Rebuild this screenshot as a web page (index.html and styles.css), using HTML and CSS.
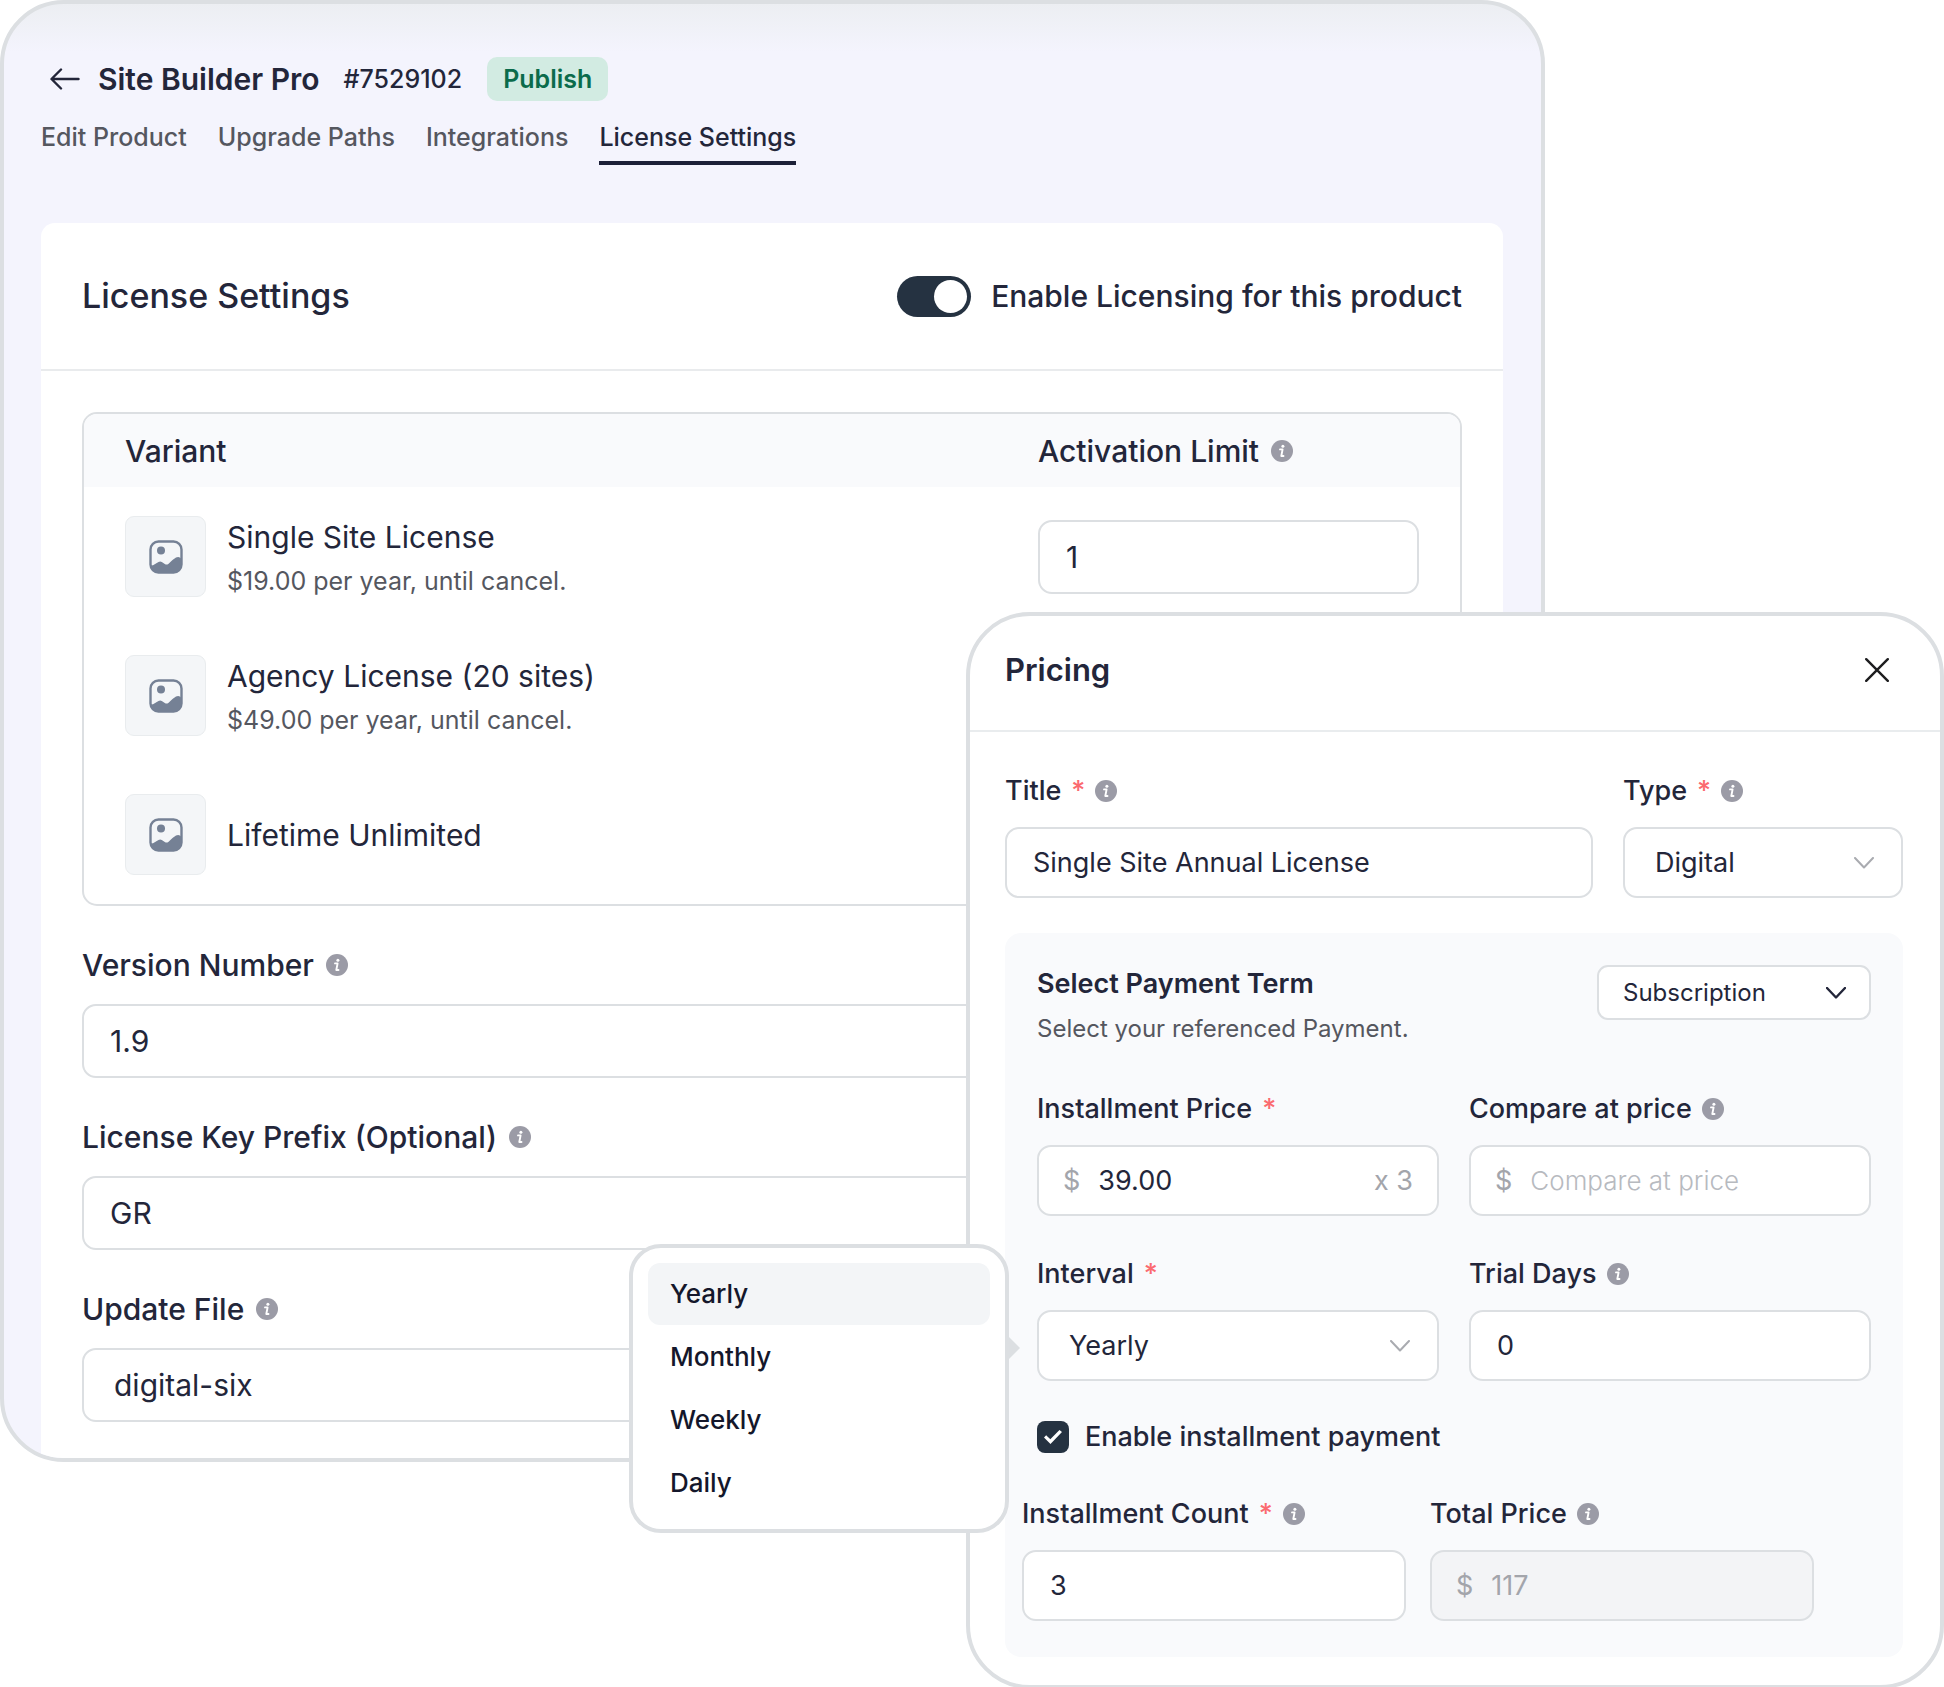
FILE: index.html
```html
<!DOCTYPE html>
<html lang="en">
<head>
<meta charset="utf-8">
<meta name="viewport" content="width=device-width, initial-scale=1">
<title>Site Builder Pro – License Settings</title>
<link rel="stylesheet" href="styles.css">
</head>
<body>
<svg class="sprite" aria-hidden="true">
  <symbol id="i-info" viewBox="0 0 22 22">
    <circle cx="11" cy="11" r="11" fill="#9b9ba6"/>
    <circle cx="11.9" cy="6.2" r="1.5" fill="#fff"/>
    <path d="M9 9.4h2.6l-1.3 6.6h2.2" fill="none" stroke="#fff" stroke-width="1.9" stroke-linecap="round" stroke-linejoin="round"/>
  </symbol>
  <symbol id="i-image" viewBox="0 0 34 34">
    <rect x="1.5" y="1.5" width="31" height="31" rx="8" fill="none" stroke="#758195" stroke-width="2.4"/>
    <circle cx="12" cy="10.500" r="4" fill="#758195"/>
    <path d="M1.500 25.500l2.500-.3 5.500-3.200c1.200-.7 2.200-.7 3.300 0l3 2c1.200.8 2.300.8 3.500 0l4.200-4 3.500-2.500c1.500-.9 3-.8 4.200.2l1.500 1.300V25a8 8 0 0 1-8 8H10a8 8 0 0 1-8.500-7.500z" fill="#758195"/>
  </symbol>
  <symbol id="i-chevron" viewBox="0 0 20 12">
    <path d="M1 1l9 9.500L19 1" fill="none" stroke="currentColor" stroke-linecap="round" stroke-linejoin="round"/>
  </symbol>
</svg>

<div class="stage">
  <main class="product">
    <header class="product-head">
      <div class="title-row">
        <button class="back" type="button" aria-label="Back">
          <svg width="30" height="22" viewBox="0 0 30 22" fill="none" stroke="#23263a" stroke-width="2.400" stroke-linecap="round" stroke-linejoin="round"><path d="M11 1.500L1.500 11l9.500 9.500M2 11h26.500"/></svg>
        </button>
        <h1>Site Builder Pro</h1>
        <span class="product-id">#7529102</span>
        <span class="badge">Publish</span>
      </div>
      <nav class="tabs">
        <a href="#edit">Edit Product</a>
        <a href="#upgrade">Upgrade Paths</a>
        <a href="#integrations">Integrations</a>
        <a href="#license" class="active" aria-current="page">License Settings</a>
      </nav>
    </header>

    <section class="card">
      <div class="card-head">
        <h2>License Settings</h2>
        <label class="switch-label"><input class="switch" type="checkbox" checked>Enable Licensing for this product</label>
      </div>
      <div class="card-body">
        <table class="variants">
          <thead>
            <tr>
              <th scope="col">Variant</th>
              <th scope="col" class="limit"><span class="label">Activation Limit <svg class="info"><use href="#i-info"/></svg></span></th>
            </tr>
          </thead>
          <tbody>
            <tr>
              <td><div class="variant"><span class="thumb"><svg><use href="#i-image"/></svg></span><div class="details"><p class="name">Single Site License</p><p class="price">$19.00 per year, until cancel.</p></div></div></td>
              <td class="limit"><input class="control" type="text" value="1" aria-label="Activation limit"></td>
            </tr>
            <tr>
              <td><div class="variant"><span class="thumb"><svg><use href="#i-image"/></svg></span><div class="details"><p class="name">Agency License (20 sites)</p><p class="price">$49.00 per year, until cancel.</p></div></div></td>
              <td class="limit"></td>
            </tr>
            <tr>
              <td><div class="variant"><span class="thumb"><svg><use href="#i-image"/></svg></span><p class="name">Lifetime Unlimited</p></div></td>
              <td class="limit"></td>
            </tr>
          </tbody>
        </table>

        <div class="field">
          <label class="label" for="version">Version Number <svg class="info"><use href="#i-info"/></svg></label>
          <input class="control" id="version" type="text" value="1.9">
        </div>
        <div class="field">
          <label class="label" for="prefix">License Key Prefix (Optional) <svg class="info"><use href="#i-info"/></svg></label>
          <input class="control" id="prefix" type="text" value="GR">
        </div>
        <div class="field">
          <label class="label" for="file">Update File <svg class="info"><use href="#i-info"/></svg></label>
          <select class="control" id="file"><option>digital-six</option></select>
        </div>
      </div>
    </section>
  </main>

  <section class="pricing">
    <header class="pricing-head">
      <h2>Pricing</h2>
      <button class="close" type="button" aria-label="Close">
        <svg width="24" height="24" viewBox="0 0 24 24" fill="none" stroke="#1d1d1f" stroke-width="2.400" stroke-linecap="round"><path d="M1.200 1.200l21.600 21.600M22.800 1.200L1.200 22.800"/></svg>
      </button>
    </header>
    <div class="pricing-body">
      <div class="grid title-grid">
        <div class="field">
          <label class="label" for="title">Title <span class="req">*</span> <svg class="info"><use href="#i-info"/></svg></label>
          <input class="control" id="title" type="text" value="Single Site Annual License">
        </div>
        <div class="field">
          <label class="label" for="type">Type <span class="req">*</span> <svg class="info"><use href="#i-info"/></svg></label>
          <div class="select"><select class="control" id="type"><option>Digital</option></select><svg class="chevron"><use href="#i-chevron"/></svg></div>
        </div>
      </div>

      <div class="term">
        <div class="term-head">
          <div class="term-text">
            <h3>Select Payment Term</h3>
            <p>Select your referenced Payment.</p>
          </div>
          <div class="select compact"><select class="control" aria-label="Payment term"><option>Subscription</option></select><svg class="chevron"><use href="#i-chevron"/></svg></div>
        </div>

        <div class="grid halves">
          <div class="field">
            <label class="label" for="price">Installment Price <span class="req">*</span></label>
            <div class="control group"><span class="affix">$</span><input id="price" type="text" value="39.00"><span class="affix">x 3</span></div>
          </div>
          <div class="field">
            <label class="label" for="compare">Compare at price <svg class="info"><use href="#i-info"/></svg></label>
            <div class="control group"><span class="affix">$</span><input id="compare" type="text" placeholder="Compare at price"></div>
          </div>
          <div class="field">
            <label class="label" for="interval">Interval <span class="req">*</span></label>
            <div class="select">
              <select class="control" id="interval"><option>Yearly</option></select><svg class="chevron"><use href="#i-chevron"/></svg>
              <ul class="menu">
                <li><button type="button" class="selected">Yearly</button></li>
                <li><button type="button">Monthly</button></li>
                <li><button type="button">Weekly</button></li>
                <li><button type="button">Daily</button></li>
              </ul>
            </div>
          </div>
          <div class="field">
            <label class="label" for="trial">Trial Days <svg class="info"><use href="#i-info"/></svg></label>
            <input class="control" id="trial" type="text" value="0">
          </div>
        </div>

        <label class="check-label">
          <input class="check" type="checkbox" checked>
          Enable installment payment
        </label>

        <div class="grid installments">
          <div class="field">
            <label class="label" for="count">Installment Count <span class="req">*</span> <svg class="info"><use href="#i-info"/></svg></label>
            <input class="control" id="count" type="text" value="3">
          </div>
          <div class="field">
            <label class="label" for="total">Total Price <svg class="info"><use href="#i-info"/></svg></label>
            <div class="control group disabled"><span class="affix">$</span><input id="total" type="text" value="117" disabled></div>
          </div>
        </div>
      </div>
    </div>
  </section>
</div>
</body>
</html>
```
FILE: styles.css
```css
:root {
  --ink: #23263a;
  --muted: #55575f;
  --faint: #a3a5ab;
  --frame: #dcdfe2;
  --line: #dcdfe2;
  --navy: #253241;
}

* {
  box-sizing: border-box;
}

body {
  margin: 0;
  background: #fff;
  color: var(--ink);
  font: 400 27px/36px Inter, "Liberation Sans", sans-serif;
  font-optical-sizing: none;
}

h1, h2, h3, p, ul {
  margin: 0;
  padding: 0;
}

button, input, select {
  font: inherit;
  font-optical-sizing: inherit;
  color: inherit;
}

button {
  padding: 0;
  border: 0;
  background: none;
  cursor: pointer;
}

svg {
  display: block;
  flex: none;
}

.sprite {
  position: absolute;
  width: 0;
  height: 0;
}

/* The product page and the pricing panel share one grid row and overlap in the middle column. */
.stage {
  display: grid;
  grid-template-columns: minmax(0, 966fr) minmax(0, 579fr) minmax(0, 399fr);
  align-items: start;
}

.product {
  grid-area: 1 / 1 / 2 / 3;
  overflow: hidden;
  padding: 53px 38px 0 37px;
  border: 4px solid var(--frame);
  border-radius: 64px;
  background: linear-gradient(#eceef2, #f4f4fd 48px);
}

.title-row {
  display: flex;
  align-items: center;
  height: 44px;
  padding-left: 9px;
}

.back {
  margin-right: 18px;
}

h1 {
  font-size: 30px;
  font-weight: 600;
}

.product-id {
  margin-left: 24px;
  font-size: 25px;
  font-weight: 500;
}

.badge {
  margin-left: 25px;
  padding: 4px 16px;
  border-radius: 10px;
  background: #d2ebe2;
  color: #0b6b4b;
  font-size: 25px;
  font-weight: 600;
}

.tabs {
  display: flex;
  gap: 31px;
  margin-top: 21px;
  font-size: 25px;
  line-height: 30px;
  font-weight: 500;
}

.tabs a {
  padding-bottom: 9px;
  border-bottom: 4px solid transparent;
  color: var(--muted);
  text-decoration: none;
}

.tabs .active {
  border-color: #1c2038;
  color: var(--ink);
}

.card {
  margin-top: 58px;
  border-radius: 14px 14px 0 0;
  background: #fff;
}

.card-head {
  display: flex;
  align-items: center;
  justify-content: space-between;
  height: 148px;
  padding: 0 41px;
  border-bottom: 2px solid #e9ebed;
}

.card-head h2 {
  font-size: 34px;
  font-weight: 500;
}

.switch-label {
  display: flex;
  align-items: center;
  gap: 20px;
  font-size: 30px;
  font-weight: 500;
}

.switch {
  appearance: none;
  display: flex;
  justify-content: flex-end;
  width: 74px;
  height: 41px;
  margin: 0;
  padding: 4px;
  border-radius: 21px;
  background: var(--navy);
}

.switch::before {
  content: "";
  width: 33px;
  height: 33px;
  border-radius: 50%;
  background: #fff;
}

.card-body {
  padding: 41px 41px 36px;
  font-size: 30px;
}

.variants {
  width: 100%;
  overflow: hidden;
  border: 2px solid var(--line);
  border-radius: 15px;
  border-spacing: 0;
}

.variants th {
  height: 73px;
  padding: 0 0 0 41px;
  background: #f9fafc;
  font-weight: 500;
  text-align: left;
}

.variants td {
  height: 139px;
  padding: 0 0 0 41px;
}

.variants .limit {
  width: 422px;
  padding: 0 41px 0 0;
}

.variant {
  display: flex;
  align-items: center;
  gap: 21px;
}

.thumb {
  display: grid;
  place-items: center;
  width: 81px;
  height: 81px;
  border: 1px solid #e9ecee;
  border-radius: 9px;
  background: #f4f6f8;
}

.thumb svg {
  width: 34px;
  height: 34px;
}

.details {
  padding-top: 5px;
}

.price {
  margin-top: 8px;
  color: var(--muted);
  font-size: 25px;
}

.label {
  display: flex;
  align-items: center;
  gap: 12px;
  margin-bottom: 21px;
  font-weight: 500;
}

.variants .label {
  margin: 0;
}

.info {
  width: 22px;
  height: 22px;
}

.card-body > .field {
  margin-top: 41px;
}

.control {
  display: block;
  width: 100%;
  height: 74px;
  padding: 0 26px;
  border: 2px solid var(--line);
  border-radius: 14px;
  background: #fff;
}

select.control {
  appearance: none;
  padding: 0 30px;
}

.pricing {
  grid-area: 1 / 2 / 2 / 4;
  margin-top: 612px;
  border: 4px solid var(--frame);
  border-radius: 64px;
  background: #fff;
}

.pricing-head {
  display: flex;
  justify-content: space-between;
  padding: 34px 51px 40px 35px;
  border-bottom: 2px solid #e9ecee;
}

.pricing-head h2 {
  font-size: 31px;
  line-height: 40px;
  font-weight: 600;
}

.pricing-body {
  padding: 41px 37px 28px 35px;
}

.pricing .label {
  gap: 10px;
  margin-bottom: 18px;
}

.req {
  color: #fb6a70;
}

.grid {
  display: grid;
  gap: 40px 30px;
}

.title-grid {
  grid-template-columns: minmax(0, 588fr) minmax(0, 280fr);
}

.select {
  position: relative;
}

.pricing .control {
  height: 71px;
}

.chevron {
  position: absolute;
  top: 50%;
  right: 29px;
  width: 20px;
  height: 12px;
  margin-top: -6px;
  color: #a9abb0;
  stroke-width: 2px;
  pointer-events: none;
}

.term {
  margin-top: 35px;
  padding: 32px 0 36px;
  border-radius: 16px;
  background: #f9fafc;
}

.term-head {
  display: flex;
  align-items: flex-start;
  justify-content: space-between;
  margin: 0 32px 48px;
}

.term-text {
  padding-top: 3px;
}

.term-text h3 {
  font-size: 27px;
  line-height: 32px;
  font-weight: 600;
}

.term-text p {
  margin-top: 15px;
  color: var(--muted);
  font-size: 24px;
  line-height: 28px;
}

.compact {
  width: 274px;
}

.pricing .compact .control {
  height: 55px;
  padding: 0 24px;
  border-radius: 11px;
  font-size: 24px;
}

.compact .chevron {
  right: 25px;
  color: var(--ink);
  stroke-width: 2.4px;
}

.halves {
  grid-template-columns: repeat(2, minmax(0, 1fr));
  margin: 0 32px;
}

.group {
  display: flex;
  align-items: center;
  gap: 18px;
  padding: 0 24px;
}

.group input {
  flex: 1;
  width: 100%;
  min-width: 0;
  padding: 0;
  border: 0;
  background: none;
}

.group input::placeholder {
  color: #b7babf;
  font-size: 26px;
  font-weight: 300;
}

.affix {
  flex: none;
  color: var(--faint);
}

.group.disabled {
  background: #f3f4f6;
  color: var(--faint);
}

.menu {
  position: absolute;
  z-index: 1;
  top: -66px;
  right: calc(100% + 28px);
  display: grid;
  gap: 1px;
  width: 380px;
  padding: 15px;
  border: 4px solid var(--frame);
  border-radius: 32px;
  background: #fff;
  list-style: none;
}

.menu::after {
  content: "";
  position: absolute;
  top: 88px;
  left: 100%;
  margin-left: 3px;
  border: 12px solid transparent;
  border-right-width: 0;
  border-left-color: var(--frame);
}

.menu button {
  display: block;
  width: 100%;
  height: 62px;
  padding: 0 22px;
  border-radius: 12px;
  color: #14172b;
  font-size: 26px;
  font-weight: 500;
  text-align: left;
}

.menu .selected {
  background: #f3f5f7;
}

.check-label {
  display: flex;
  align-items: center;
  gap: 16px;
  height: 32px;
  margin: 40px 32px 43px;
  font-weight: 500;
}

.check {
  appearance: none;
  display: grid;
  place-items: center;
  width: 32px;
  height: 32px;
  margin: 0;
  border-radius: 8px;
  background: var(--navy);
}

.check::before {
  content: "";
  width: 18px;
  height: 14px;
  background: #fff;
  clip-path: polygon(0 54%, 12% 38%, 35% 66%, 86% 0, 100% 14%, 36% 100%);
}

.installments {
  grid-template-columns: repeat(2, minmax(0, 1fr));
  column-gap: 24px;
  margin: 0 89px 0 17px;
}
```
